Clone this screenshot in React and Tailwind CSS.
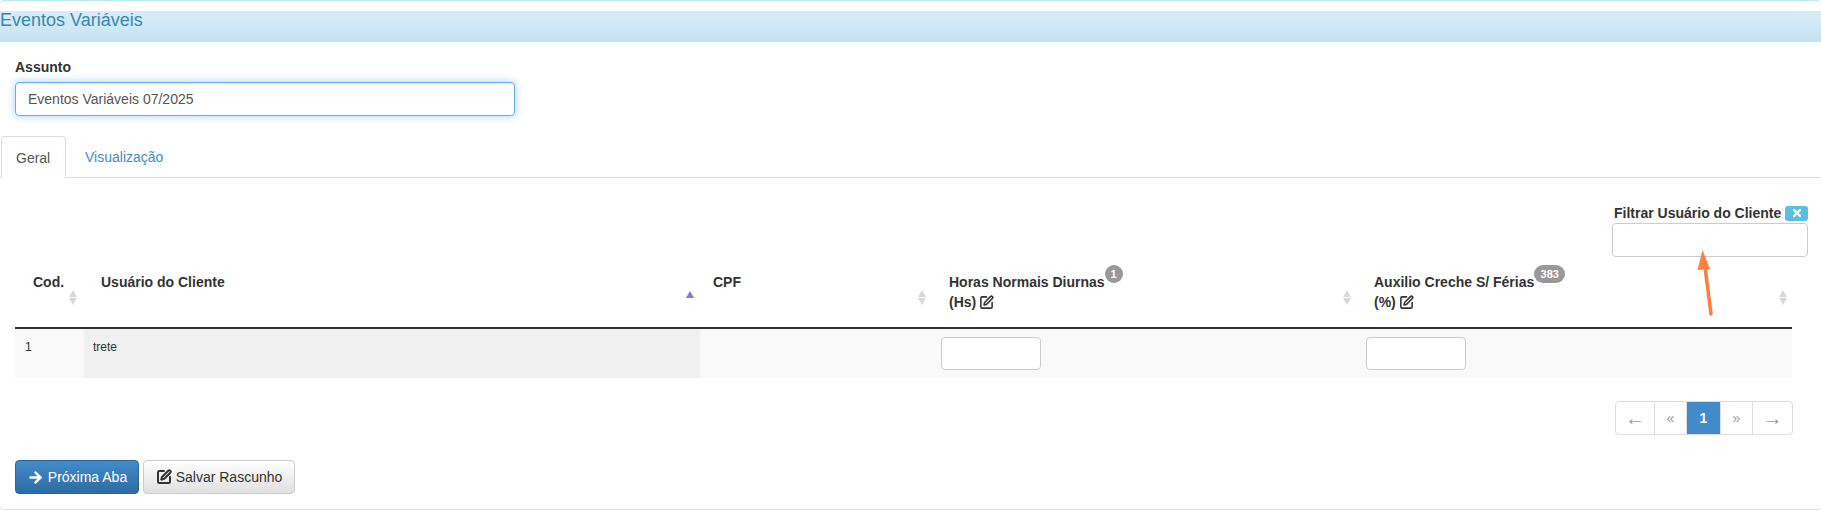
import React from 'react';
import { FaTimes } from 'react-icons/fa';
import { ArrowRight, SquarePen } from 'lucide-react';

const SortIcon = ({ className = '' }) => (
  <span className={`flex flex-col gap-[1px] shrink-0 ${className}`}>
    <span className="w-0 h-0 border-x-[4px] border-x-transparent border-b-[7px] border-b-[#d8d8d8]" />
    <span className="w-0 h-0 border-x-[4px] border-x-transparent border-t-[7px] border-t-[#d8d8d8]" />
  </span>
);

const Badge = ({ children, className = '' }) => (
  <span className={`inline-block relative -top-[9px] h-[18px] min-w-[18px] rounded-[10px] bg-[#999999] text-white text-[11px] font-bold leading-[18px] text-center ${className}`}>
    {children}
  </span>
);

const PageLink = ({ children, className = '' }) => (
  <span className={`flex items-center justify-center h-[34px] border border-[#dddddd] text-[#999999] text-[14px] -ml-px first:ml-0 ${className}`}>
    {children}
  </span>
);

export default function App() {
  return (
    <div className="h-[511px] w-[1821px] overflow-hidden bg-white font-['Liberation_Sans',Arial,sans-serif] text-[14px] text-[#333333]">
      <div className="h-[510px] border-y border-[#bce8f1] rounded-[4px] pt-[10px]">
        <div className="h-[31px] bg-gradient-to-b from-[#d9edf7] to-[#c4e3f3] text-[18px] leading-[18px] text-[#3a87ad]">
          Eventos Variáveis
        </div>

        <div className="px-[15px] pt-[16px]">
          <label className="block text-[14px] font-bold leading-[18px] mb-[6px]">Assunto</label>
          <input
            readOnly
            defaultValue="Eventos Variáveis 07/2025"
            className="block w-[500px] h-[34px] px-[12px] text-[14px] text-[#555555] bg-white rounded-[4px] border border-[#66afe9] shadow-[inset_0_1px_1px_rgba(0,0,0,0.075),0_0_8px_rgba(102,175,233,0.6)] outline-none"
          />
        </div>

        <div className="mt-[20px] flex h-[42px] border-b border-[#dddddd] px-[1px] text-[14px]">
          <div className="w-[65px] h-[42px] pl-[14px] pt-[12px] leading-[18px] bg-white border border-[#dddddd] border-b-white rounded-t-[4px] text-[#555555]">
            Geral
          </div>
          <div className="pl-[19px] pt-[12px] leading-[18px] text-[#428bca]">Visualização</div>
        </div>

        <div className="px-[15px]">
          <div className="relative flex justify-end pt-[26px] -mr-[2px]">
            <div className="w-[196px]">
              <div className="flex items-center justify-between pl-[2px] h-[18px] font-bold whitespace-nowrap">
                <span>Filtrar Usuário do Cliente</span>
                <span className="flex items-center justify-center w-[23px] h-[15px] rounded-[3px] bg-[#5bc0de] text-white">
                  <FaTimes size={12} />
                </span>
              </div>
              <input readOnly className="block w-[196px] h-[34px] mt-[1px] rounded-[4px] border border-[#cccccc] bg-white outline-none" />
            </div>
            <svg className="absolute left-[1675px] top-[71px]" width="30" height="72" viewBox="0 0 30 72">
              <path d="M21 65 L15 18" stroke="#ff7f3f" strokeWidth="3.5" strokeLinecap="round" fill="none" />
              <path d="M12.5 1 L7.5 21 L20 20 Z" fill="#ff7f3f" />
            </svg>
          </div>

          <table className="w-[1777px] table-fixed border-collapse">
            <colgroup>
              <col className="w-[69px]" />
              <col className="w-[616px]" />
              <col className="w-[233px]" />
              <col className="w-[425px]" />
              <col className="w-[434px]" />
            </colgroup>
            <thead>
              <tr className="h-[71px] border-b-2 border-[#333333] font-bold text-left align-top">
                <th className="pl-[18px] pr-[7px] pt-[15px]">
                  <div className="flex justify-between">
                    <span className="leading-[20px]">Cod.</span>
                    <SortIcon className="mt-[18px]" />
                  </div>
                </th>
                <th className="pl-[17px] pr-[5px] pt-[15px]">
                  <div className="flex justify-between">
                    <span className="leading-[20px]">Usuário do Cliente</span>
                    <span className="mt-[19px] mr-[1px] w-0 h-0 border-x-[4px] border-x-transparent border-b-[7px] border-b-[#7b7bdc]" />
                  </div>
                </th>
                <th className="pl-[13px] pr-[7px] pt-[15px]">
                  <div className="flex justify-between">
                    <span className="leading-[20px]">CPF</span>
                    <SortIcon className="mt-[18px]" />
                  </div>
                </th>
                <th className="pl-[16px] pr-[7px] pt-[15px]">
                  <div className="flex justify-between">
                    <div className="leading-[20px]">
                      Horas Normais Diurnas<Badge>1</Badge>
                      <div className="flex items-center gap-[3px]">(Hs) <SquarePen size={15} strokeWidth={2.5} /></div>
                    </div>
                    <SortIcon className="mt-[18px]" />
                  </div>
                </th>
                <th className="pl-[16px] pr-[5px] pt-[15px]">
                  <div className="flex justify-between">
                    <div className="leading-[20px]">
                      Auxilio Creche S/ Férias<Badge className="w-[31px]">383</Badge>
                      <div className="flex items-center gap-[3px]">(%) <SquarePen size={15} strokeWidth={2.5} /></div>
                    </div>
                    <SortIcon className="mt-[18px]" />
                  </div>
                </th>
              </tr>
            </thead>
            <tbody>
              <tr className="h-[50px] bg-[#f9f9f9] align-top text-[12px]">
                <td className="pl-[10px] pt-[9px] leading-[18px]">1</td>
                <td className="pl-[9px] pt-[9px] leading-[18px] bg-[#f0f0f0]">trete</td>
                <td />
                <td className="pl-[8px] pt-[8px]">
                  <input readOnly className="block w-[100px] h-[33px] rounded-[4px] border border-[#cccccc] bg-white outline-none" />
                </td>
                <td className="pl-[8px] pt-[8px]">
                  <input readOnly className="block w-[100px] h-[33px] rounded-[4px] border border-[#cccccc] bg-white outline-none" />
                </td>
              </tr>
            </tbody>
          </table>

          <div className="flex justify-end mt-[23px] pr-[13px]">
            <div className="flex">
              <PageLink className="w-[40px] rounded-l-[4px] text-[20px] leading-[20px]">←</PageLink>
              <PageLink className="w-[33px]">«</PageLink>
              <PageLink className="w-[35px] border-[#428bca] bg-[#428bca] text-white font-bold">1</PageLink>
              <PageLink className="w-[33px]">»</PageLink>
              <PageLink className="w-[41px] rounded-r-[4px] text-[20px] leading-[20px]">→</PageLink>
            </div>
          </div>

          <div className="flex gap-[4px] mt-[25px] text-[14px]">
            <button className="flex items-center justify-center gap-[4px] w-[124px] h-[34px] rounded-[4px] border border-[#2b669a] bg-gradient-to-b from-[#428bca] to-[#2d6ca2] text-white">
              <ArrowRight size={17} strokeWidth={3.5} /> Próxima Aba
            </button>
            <button className="flex items-center justify-center gap-[4px] w-[152px] h-[34px] rounded-[4px] border border-[#cccccc] bg-gradient-to-b from-white to-[#e0e0e0] text-[#333333]">
              <SquarePen size={16} strokeWidth={3} /> Salvar Rascunho
            </button>
          </div>
        </div>
      </div>
    </div>
  );
}
